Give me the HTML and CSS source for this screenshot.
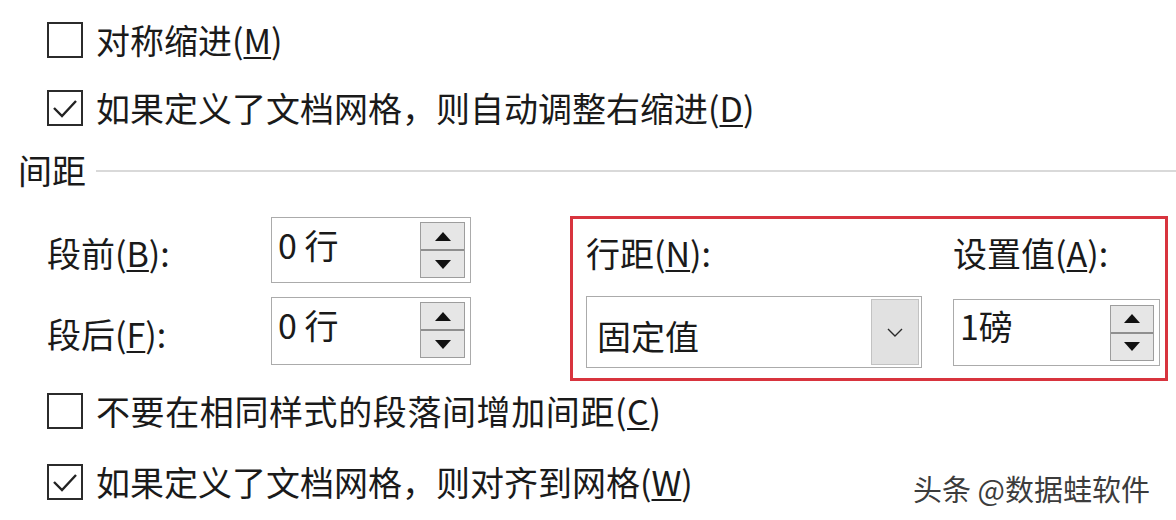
FILE: index.html
```html
<!DOCTYPE html>
<html lang="zh-CN">
<head>
<meta charset="utf-8">
<title>段落</title>
<link rel="stylesheet" href="styles.css">
</head>
<body>
<div class="page">
  <div class="check-row first">
    <span class="checkbox"></span>
    <span class="label">对称缩进(<u>M</u>)</span>
  </div>
  <div class="check-row">
    <span class="checkbox checked"><svg viewBox="0 0 32 32" width="32" height="32"><polyline points="5,16 13,24 27,9" fill="none" stroke="#222" stroke-width="2.4"/></svg></span>
    <span class="label">如果定义了文档网格，则自动调整右缩进(<u>D</u>)</span>
  </div>
  <div class="section-head">
    <span class="label">间距</span>
    <span class="rule"></span>
  </div>
  <div class="spacing">
    <div class="spacing-left">
      <span class="label field-label">段前(<u>B</u>):</span>
      <div class="spin">
        <span class="spin-value">0 行</span>
        <span class="spin-buttons"><span class="spin-btn"><i class="tri-up"></i></span><span class="spin-btn lower"><i class="tri-down"></i></span></span>
      </div>
      <span class="label field-label">段后(<u>F</u>):</span>
      <div class="spin tall">
        <span class="spin-value">0 行</span>
        <span class="spin-buttons"><span class="spin-btn"><i class="tri-up"></i></span><span class="spin-btn lower"><i class="tri-down"></i></span></span>
      </div>
    </div>
    <div class="highlight">
      <span class="label top-label">行距(<u>N</u>):</span>
      <span class="label top-label">设置值(<u>A</u>):</span>
      <div class="dropdown">
        <span class="dropdown-value">固定值</span>
        <span class="dropdown-btn"><svg viewBox="0 0 18 11" width="18" height="11"><polyline points="2,2 9,9 16,2" fill="none" stroke="#2a2a2a" stroke-width="1.4"/></svg></span>
      </div>
      <div class="spin right-spin">
        <span class="spin-value">1磅</span>
        <span class="spin-buttons"><span class="spin-btn"><i class="tri-up"></i></span><span class="spin-btn lower"><i class="tri-down"></i></span></span>
      </div>
    </div>
  </div>
  <div class="check-row bottom">
    <span class="checkbox"></span>
    <span class="label wide">不要在相同样式的段落间增加间距(<u>C</u>)</span>
  </div>
  <div class="check-row bottom">
    <span class="checkbox checked"><svg viewBox="0 0 32 32" width="32" height="32"><polyline points="5,16 13,24 27,9" fill="none" stroke="#222" stroke-width="2.4"/></svg></span>
    <span class="label">如果定义了文档网格，则对齐到网格(<u>W</u>)</span>
  </div>
  <div class="watermark">头条 @数据蛙软件</div>
</div>
</body>
</html>
```

FILE: styles.css
```css
* { box-sizing: border-box; }
html, body {
  margin: 0;
  padding: 0;
  background: #ffffff;
}
body {
  width: 1176px;
  height: 520px;
  overflow: hidden;
  font-family: "Noto Sans CJK SC", "Microsoft YaHei", sans-serif;
  color: #1a1a1a;
}
.page {
  position: relative;
  width: 1176px;
  height: 520px;
  padding-top: 6px;
}
.label {
  font-size: 34px;
  line-height: 1;
  white-space: nowrap;
}
.label.wide {
  letter-spacing: 0.6px;
}
.label u {
  text-decoration-thickness: 2px;
  text-underline-offset: 3px;
}
.check-row {
  display: flex;
  align-items: center;
  gap: 13px;
  height: 68px;
  padding-left: 47px;
}
.check-row.bottom {
  height: 71px;
}
.checkbox {
  width: 36px;
  height: 36px;
  border: 2px solid #2b2b2b;
  background: #fff;
  display: flex;
  align-items: center;
  justify-content: center;
  flex-shrink: 0;
}
.section-head {
  display: flex;
  align-items: center;
  height: 62px;
  padding-left: 18px;
}
.section-head .label {
  margin-bottom: 6px;
}
.rule {
  flex: 1;
  height: 2px;
  background: #d9d9d9;
  margin-left: 10px;
  margin-bottom: 4px;
}
.spacing {
  display: flex;
  align-items: flex-start;
  height: 171px;
}
.spacing-left {
  width: 570px;
  padding: 13px 0 0 47px;
  display: grid;
  grid-template-columns: 224px 200px;
  grid-template-rows: 66px 68px;
  row-gap: 14px;
  align-items: center;
}
.field-label {
  margin-top: 6px;
}
.spin {
  height: 66px;
  border: 1px solid #ababab;
  background: #fff;
  display: flex;
  justify-content: space-between;
  align-items: flex-start;
  padding: 4px 5px 4px 6px;
}
.spin.tall {
  height: 68px;
}
.spin-value {
  font-size: 34px;
  line-height: 1;
  margin-top: 6px;
  white-space: nowrap;
}
.spin-buttons {
  width: 45px;
  height: 56px;
  display: flex;
  flex-direction: column;
  border: 1px solid #9d9d9d;
  background: #e6e6e6;
}
.spin-btn {
  flex: 1;
  display: flex;
  align-items: center;
  justify-content: center;
}
.spin-btn.lower {
  border-top: 2px solid #8f8f8f;
}
.tri-up {
  width: 0;
  height: 0;
  border-left: 8px solid transparent;
  border-right: 8px solid transparent;
  border-bottom: 9px solid #111;
}
.tri-down {
  width: 0;
  height: 0;
  border-left: 8px solid transparent;
  border-right: 8px solid transparent;
  border-top: 9px solid #111;
}
.highlight {
  width: 598px;
  height: 165px;
  margin-top: 12px;
  border: 3px solid #d8343e;
  padding: 10px 5px 10px 13px;
  display: grid;
  grid-template-columns: 336px 207px;
  grid-template-rows: 48px 72px;
  column-gap: 31px;
  row-gap: 19px;
  align-items: center;
}
.top-label {
  line-height: 48px;
}
.dropdown {
  height: 72px;
  border: 1px solid #ababab;
  background: #fff;
  display: flex;
  align-items: stretch;
  padding: 2px 2px 2px 0;
}
.dropdown-value {
  flex: 1;
  font-size: 34px;
  line-height: 1;
  padding-left: 10px;
  align-self: center;
  margin-top: 8px;
}
.dropdown-btn {
  width: 48px;
  background: #e1e1e1;
  border: 1px solid #c2c2c2;
  display: flex;
  align-items: center;
  justify-content: center;
}
.right-spin {
  height: 67px;
  padding: 5px 5px 5px 6px;
}
.right-spin .spin-value {
  margin-top: 4px;
}
.right-spin .spin-buttons {
  width: 44px;
}
.watermark {
  position: absolute;
  left: 913px;
  top: 471px;
  font-size: 29px;
  line-height: 34px;
  color: #3c3c3c;
  white-space: nowrap;
  text-shadow: 1px 1px 0 #ffffff;
}
```
